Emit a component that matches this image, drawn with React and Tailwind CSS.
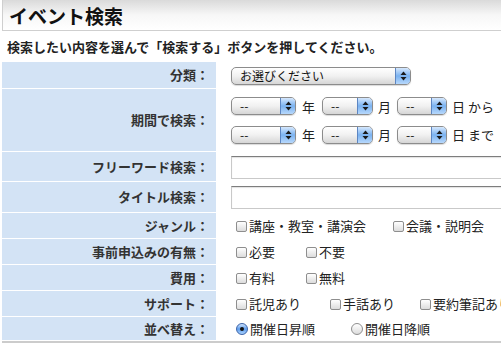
import React from 'react';

const font = { fontFamily: '"Noto Sans CJK JP", "Noto Sans", sans-serif' };

function Arrows() {
  return (
    <svg width="7" height="10" viewBox="0 0 7 10">
      <path d="M3.5 0.5 L6.5 4 H0.5 Z" fill="#1a1a1a" />
      <path d="M3.5 9.5 L6.5 6 H0.5 Z" fill="#1a1a1a" />
    </svg>
  );
}

function Select({ width, text }) {
  return (
    <div
      className="flex h-[18px] shrink-0 items-center overflow-hidden rounded-[5px] border border-[#8c8c8c] bg-gradient-to-b from-white via-[#f1f1f1] to-[#d6d6d6] shadow-[0_1px_1px_rgba(0,0,0,0.15)]"
      style={{ width }}
    >
      <span className="flex-1 pl-[8px] text-[12px] leading-none text-[#111]">{text}</span>
      <span className="flex h-full w-[15px] items-center justify-center border-l border-[#5d86c2] bg-gradient-to-b from-[#d6e8fd] via-[#7ab2f0] to-[#b7d8fc]">
        <Arrows />
      </span>
    </div>
  );
}

function Check({ label, className = '' }) {
  return (
    <span className={`flex items-center whitespace-nowrap ${className}`}>
      <span className="mr-[2px] h-[11px] w-[11px] shrink-0 rounded-[2px] border border-[#8e8e8e] bg-gradient-to-b from-white to-[#dcdcdc]" />
      {label}
    </span>
  );
}

function Radio({ label, checked, className = '' }) {
  return (
    <span className={`flex items-center whitespace-nowrap ${className}`}>
      {checked ? (
        <span className="mr-[2px] flex h-[12px] w-[12px] shrink-0 items-center justify-center rounded-full border border-[#3a62a8] bg-gradient-to-b from-[#cfe4fd] via-[#5d9cec] to-[#a9d2fd]">
          <span className="h-[4px] w-[4px] rounded-full bg-[#111]" />
        </span>
      ) : (
        <span className="mr-[2px] h-[12px] w-[12px] shrink-0 rounded-full border border-[#8e8e8e] bg-gradient-to-b from-white to-[#dcdcdc]" />
      )}
      {label}
    </span>
  );
}

function Row({ label, h, children, valueClass = '' }) {
  return (
    <div className="flex" style={{ height: h }}>
      <div className="flex w-[214px] shrink-0 items-center justify-end border-b border-white bg-[#d3e3f5] pr-[7px] text-[13px] font-bold text-[#333]">
        {label}
      </div>
      <div className={`flex min-w-0 flex-1 items-center text-[13px] text-[#222] ${valueClass}`}>{children}</div>
    </div>
  );
}

function TextBox() {
  return (
    <div className="h-[23px] w-[300px] shrink-0 border border-[#c9c9c9] border-t-[#7d7d7d] bg-white shadow-[inset_0_1px_1px_rgba(0,0,0,0.12)]" />
  );
}

function DateLine({ tail }) {
  return (
    <div className="flex items-center">
      <Select width={65} text="--" />
      <span className="ml-[6px] mr-[7px]">年</span>
      <Select width={51} text="--" />
      <span className="ml-[5px] mr-[6px]">月</span>
      <Select width={50} text="--" />
      <span className="ml-[5px] whitespace-nowrap">日 {tail}</span>
    </div>
  );
}

export default function App() {
  return (
    <div className="h-[344px] w-[501px] overflow-hidden bg-white" style={font}>
      {/* Title */}
      <div className="ml-[2px] flex h-[31px] items-center border-b border-l border-[#cfcfcf] bg-gradient-to-b from-[#dadada] via-[#f7f7f7] to-white pl-[6px]">
        <h1 className="text-[19px] font-bold leading-none text-[#111]">イベント検索</h1>
      </div>

      <div className="flex h-[31px] items-center pl-[7px] text-[13px] font-bold text-[#222]">
        検索したい内容を選んで「検索する」ボタンを押してください。
      </div>

      {/* Search form */}
      <div className="ml-[2px] border-b-2 border-[#cccccc]">
        <Row label="分類：" h={27} valueClass="pl-[15px]">
          <Select width={180} text="お選びください" />
        </Row>
        <Row label="期間で検索：" h={63} valueClass="pl-[15px]">
          <div className="flex flex-col gap-[9px]">
            <DateLine tail="から" />
            <DateLine tail="まで" />
          </div>
        </Row>
        <Row label="フリーワード検索：" h={30} valueClass="pl-[15px]">
          <TextBox />
        </Row>
        <Row label="タイトル検索：" h={31} valueClass="pl-[15px]">
          <TextBox />
        </Row>
        <Row label="ジャンル：" h={26} valueClass="pl-[20px]">
          <Check label="講座・教室・講演会" className="mr-[27px]" />
          <Check label="会議・説明会" />
        </Row>
        <Row label="事前申込みの有無：" h={26} valueClass="pl-[20px]">
          <Check label="必要" className="mr-[31px]" />
          <Check label="不要" />
        </Row>
        <Row label="費用：" h={26} valueClass="pl-[20px]">
          <Check label="有料" className="mr-[31px]" />
          <Check label="無料" />
        </Row>
        <Row label="サポート：" h={26} valueClass="pl-[20px]">
          <Check label="託児あり" className="mr-[29px]" />
          <Check label="手話あり" className="mr-[25px]" />
          <Check label="要約筆記あり" />
        </Row>
        <Row label="並べ替え：" h={24} valueClass="pl-[20px]">
          <Radio label="開催日昇順" checked className="mr-[36px]" />
          <Radio label="開催日降順" />
        </Row>
      </div>
    </div>
  );
}
